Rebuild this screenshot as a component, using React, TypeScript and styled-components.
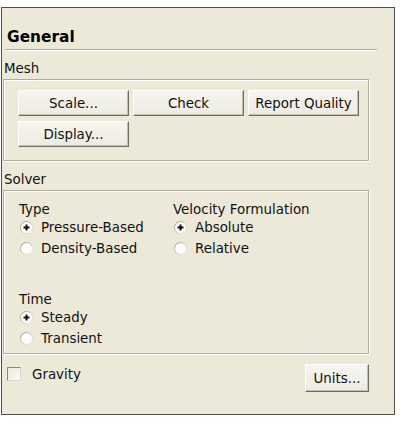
import React from 'react';
import styled, { createGlobalStyle } from 'styled-components';

const GlobalStyle = createGlobalStyle`
  html, body {
    margin: 0;
    padding: 0;
    background: #ffffff;
  }
  body {
    font-family: "DejaVu Sans", Verdana, sans-serif;
    font-size: 13.4px;
    color: #111111;
  }
`;

const Panel = styled.div`
  box-sizing: border-box;
  margin: 7px 0 0 1px;
  width: 394px;
  height: 408px;
  border: 1px solid #4f4f4f;
  background: #ece9d8;
  padding: 0 0 0 1px;
  display: flex;
  flex-direction: column;
`;

const Header = styled.div`
  margin: 0 17px 0 2px;
  padding: 20px 0 3px 2px;
  line-height: 18px;
  font-size: 15.4px;
  font-weight: bold;
  color: #000;
  border-bottom: 1px solid #aca899;
  box-shadow: 0 1px 0 #ffffff;
`;

const SectionLabel = styled.div<{ $top: number }>`
  margin: ${({ $top }) => $top}px 0 2px 1px;
  height: 16px;
  line-height: 16px;
`;

const GroupBox = styled.div<{ $pad: string }>`
  box-sizing: border-box;
  width: 366px;
  border: 1px solid #b0ad9e;
  box-shadow: 1px 1px 0 #ffffff, inset 1px 1px 0 #ffffff;
  padding: ${({ $pad }) => $pad};
`;

const ButtonGrid = styled.div`
  display: grid;
  grid-template-columns: repeat(3, 111px);
  grid-auto-rows: 26px;
  column-gap: 4px;
  row-gap: 5px;
`;

const Button = styled.button<{ $w?: number; $h?: number }>`
  box-sizing: border-box;
  width: ${({ $w }) => ($w ? `${$w}px` : '100%')};
  height: ${({ $h }) => ($h ? `${$h}px` : '100%')};
  margin: 0;
  padding: 0;
  font-family: inherit;
  font-size: 13.4px;
  color: #111;
  background: linear-gradient(#f6f5ef, #edebe1);
  border-style: solid;
  border-width: 1px;
  border-color: #ffffff #6f6d62 #6f6d62 #ffffff;
  box-shadow: inset -1px -1px 0 #c2bfae;
`;

const Columns = styled.div`
  display: grid;
  grid-template-columns: 154px 1fr;
`;

const Fieldset = styled.div`
  display: flex;
  flex-direction: column;
`;

const FieldTitle = styled.div`
  height: 15px;
  line-height: 15px;
`;

const RadioRow = styled.label`
  display: flex;
  align-items: center;
  height: 21px;
  gap: 8px;
  padding-left: 1px;
`;

const TimeBlock = styled(Fieldset)`
  margin-top: 33px;
`;

const Footer = styled.div`
  margin-top: 10px;
  width: 366px;
  display: flex;
  justify-content: space-between;
  align-items: flex-start;
`;

const CheckRow = styled.label`
  display: flex;
  align-items: center;
  gap: 11px;
  height: 14px;
  margin: 3px 0 0 4px;
`;

const CheckBox = styled.span`
  box-sizing: border-box;
  width: 14px;
  height: 14px;
  border: 1px solid #8d8b7e;
  border-right-color: #d8d6ca;
  border-bottom-color: #d8d6ca;
  background: linear-gradient(135deg, #e9e7dc, #fbfbf8);
`;

const Radio = ({ checked }: { checked?: boolean }) => (
  <svg width="13" height="13" viewBox="0 0 13 13">
    <defs>
      <linearGradient id="rim" x1="0" y1="0" x2="1" y2="1">
        <stop offset="0" stopColor="#8e8c80" />
        <stop offset="0.5" stopColor="#c9c7bb" />
        <stop offset="1" stopColor="#f2f1ea" />
      </linearGradient>
    </defs>
    <circle cx="6.5" cy="6.5" r="6" fill="#ffffff" stroke="url(#rim)" strokeWidth="1" />
    {checked && (
      <path
        d="M5.5 3.5h2v2h2v2h-2v2h-2v-2h-2v-2h2z"
        fill="#111111"
      />
    )}
  </svg>
);

const RadioOption = ({ label, checked }: { label: string; checked?: boolean }) => (
  <RadioRow>
    <Radio checked={checked} />
    {label}
  </RadioRow>
);

export default function App() {
  return (
    <>
      <GlobalStyle />
      <Panel>
        <Header>General</Header>

        <SectionLabel $top={11}>Mesh</SectionLabel>
        <GroupBox $pad="10px 0 13px 14px">
          <ButtonGrid>
            <Button>Scale...</Button>
            <Button>Check</Button>
            <Button>Report Quality</Button>
            <Button>Display...</Button>
          </ButtonGrid>
        </GroupBox>

        <SectionLabel $top={11}>Solver</SectionLabel>
        <GroupBox $pad="11px 0 4px 15px">
          <Columns>
            <Fieldset>
              <FieldTitle>Type</FieldTitle>
              <RadioOption label="Pressure-Based" checked />
              <RadioOption label="Density-Based" />
            </Fieldset>
            <Fieldset>
              <FieldTitle>Velocity Formulation</FieldTitle>
              <RadioOption label="Absolute" checked />
              <RadioOption label="Relative" />
            </Fieldset>
          </Columns>
          <TimeBlock>
            <FieldTitle>Time</FieldTitle>
            <RadioOption label="Steady" checked />
            <RadioOption label="Transient" />
          </TimeBlock>
        </GroupBox>

        <Footer>
          <CheckRow>
            <CheckBox />
            Gravity
          </CheckRow>
          <Button $w={64} $h={28}>Units...</Button>
        </Footer>
      </Panel>
    </>
  );
}
